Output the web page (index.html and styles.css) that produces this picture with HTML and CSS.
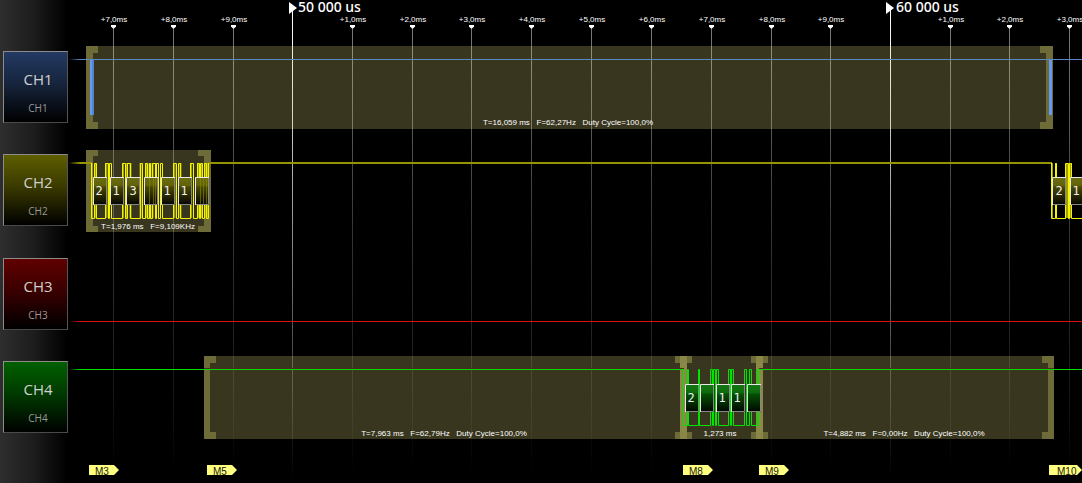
FILE: index.html
```html
<!DOCTYPE html>
<html lang="en">
<head>
<meta charset="utf-8">
<title>Logic analyzer</title>
<link rel="stylesheet" href="styles.css">
</head>
<body>
<div class="analyzer">
  <nav class="channels" aria-label="Channels">
    <button class="channel blue" type="button"><span class="name">CH1</span><span class="alias">CH1</span></button>
    <button class="channel yellow" type="button"><span class="name">CH2</span><span class="alias">CH2</span></button>
    <button class="channel red" type="button"><span class="name">CH3</span><span class="alias">CH3</span></button>
    <button class="channel green" type="button"><span class="name">CH4</span><span class="alias">CH4</span></button>
  </nav>
  <main class="plot">
    <svg class="canvas" viewBox="69 0 1013 483" preserveAspectRatio="xMinYMin slice" role="img" aria-label="Channel waveforms">
      <defs>
        <linearGradient id="minor" gradientUnits="userSpaceOnUse" x1="0" y1="28" x2="0" y2="475">
          <stop offset="0" stop-color="#787878"/><stop offset=".45" stop-color="#363636"/><stop offset=".8" stop-color="#181818"/><stop offset="1" stop-color="#000"/>
        </linearGradient>
        <linearGradient id="major" gradientUnits="userSpaceOnUse" x1="0" y1="12" x2="0" y2="480">
          <stop offset="0" stop-color="#fff"/><stop offset=".2" stop-color="#d4d4d4"/><stop offset=".7" stop-color="#505050"/><stop offset="1" stop-color="#000"/>
        </linearGradient>
        <linearGradient id="fade" gradientUnits="userSpaceOnUse" x1="69" y1="0" x2="80" y2="0">
          <stop offset="0" stop-color="#000"/><stop offset="1" stop-color="#000" stop-opacity="0"/>
        </linearGradient>
        <linearGradient id="olive" x1="0" y1="0" x2="0" y2="1">
          <stop offset="0" stop-color="#6c6c10"/><stop offset=".3" stop-color="#626208"/><stop offset=".36" stop-color="#484804"/><stop offset="1" stop-color="#050500"/>
        </linearGradient>
        <linearGradient id="leaf" x1="0" y1="0" x2="0" y2="1">
          <stop offset="0" stop-color="#147814"/><stop offset=".3" stop-color="#0c6c0c"/><stop offset=".36" stop-color="#055005"/><stop offset="1" stop-color="#000600"/>
        </linearGradient>
        <path id="tick" d="M-2 25h5v1.500l-2 2h-1l-2-2z"/>
        <path id="flag" d="M0 2l8 6-8 6z"/>
        <path id="tag" d="M0 465h25l5 5-5 5H0z"/>
        <g id="box"><rect width="14" height="28"/><path class="dim-edge" d="M0 27.500h13.500V0"/><path class="lit-edge" d="M.5 28V.5H14"/></g>
      </defs>

      <g class="grid-minor">
        <path d="M113 28h1v447h-1zM173 28h1v447h-1zM233 28h1v447h-1zM352 28h1v447h-1zM412 28h1v447h-1zM471 28h1v447h-1zM531 28h1v447h-1zM591 28h1v447h-1zM651 28h1v447h-1zM711 28h1v447h-1zM771 28h1v447h-1zM830 28h1v447h-1zM950 28h1v447h-1zM1009 28h1v447h-1zM1069 28h1v447h-1z"/>
      </g>
      <path class="grid-major" d="M292 10h1v470h-1zM890 10h1v470h-1z"/>

      <g class="marks">
        <use href="#flag" x="289"/><use href="#flag" x="886"/>
        <use href="#tick" x="113"/><use href="#tick" x="173"/><use href="#tick" x="233"/><use href="#tick" x="352"/><use href="#tick" x="412"/><use href="#tick" x="471"/><use href="#tick" x="531"/><use href="#tick" x="591"/><use href="#tick" x="651"/><use href="#tick" x="711"/><use href="#tick" x="771"/><use href="#tick" x="830"/><use href="#tick" x="950"/><use href="#tick" x="1009"/><use href="#tick" x="1069"/>
      </g>
      <g class="major-label"><text x="298" y="12">50 000 us</text><text x="896" y="12">60 000 us</text></g>
      <g class="small-label">
        <text x="114" y="22">+7,0ms</text><text x="174" y="22">+8,0ms</text><text x="234" y="22">+9,0ms</text>
        <text x="353" y="22">+1,0ms</text><text x="413" y="22">+2,0ms</text><text x="472" y="22">+3,0ms</text><text x="532" y="22">+4,0ms</text><text x="592" y="22">+5,0ms</text><text x="652" y="22">+6,0ms</text><text x="712" y="22">+7,0ms</text><text x="772" y="22">+8,0ms</text><text x="831" y="22">+9,0ms</text>
        <text x="951" y="22">+1,0ms</text><text x="1010" y="22">+2,0ms</text><text x="1070" y="22">+3,0ms</text>
      </g>

      <g class="region">
        <path d="M86 46h967v83H86zM86 150h125v82H86zM204 356h480v83H204zM684 356h76v83h-76zM760 356h294v83H760z"/>
      </g>
      <g class="bracket">
        <path d="M86 46h12v7h-5v69h5v7H86zM1053 46h-13v7h6v69h-6v7h13z"/>
        <path d="M86 150h12v6h-5v70h5v6H86zM211 150h-13v6h6v70h-6v6h13z"/>
        <path d="M204 356h12v7h-6v69h6v7h-12zM1054 356h-12v7h6v69h-6v7h12z"/>
        <path d="M675 356h17v7h-17zM675 432h17v7h-17zM751 356h17v7h-17zM751 432h17v7h-17z"/>
      </g>
      <path class="joint" d="M680 363h7v69h-7zM756 363h7v69h-7z"/>
      <path class="joint-end" d="M680 356h7v7h-7zM680 432h7v7h-7zM756 356h7v7h-7zM756 432h7v7h-7z"/>

      <path class="blue-line" d="M69 59.500H1082"/>
      <path class="blue-block" d="M90 60h2v55h-2zM1049 60h3v55h-3z"/>
      <path class="blue-soft" d="M92 60h2v55h-2z"/>

      <path class="yellow-line" d="M69 163H92M209 163H1052"/>
      <path class="yellow-soft" d="M92 163V218M96 163V218M106.500 163V218M123 163V218M127 163V218M130.500 163V218M140.500 163V218M146 163V218M149.500 163V218M152.500 163V218M156 163V218M174.500 163V218M180.500 163V218M191 163V218M198 163V218M202 163V218M205 163V218M208 163V218M1052 163V218M1056 163V218M1067 163V218M1071 163V218"/>
      <path class="yellow-wave" d="M91.500 163V218.500H94.500V163.500H96.500V218.500H105.500V163.500H108.500V218.500H109.500V163.500H111.500V218.500H122.500V163.500H125.500V218.500H127.500V163.500H130.500V218.500H140.500V163.500H142.500V218.500H145.500V163.500H147.500V218.500H149.500V163.500H150.500V218.500H152.500V163.500H155.500V218.500H156.500V163.500H158.500V218.500H160.500V163.500H162.500V218.500H173.500V163.500H176.500V218.500H178.500V163.500H180.500V218.500H190.500V163.500H193.500V218.500H197.500V163.500H199.500V218.500H200.500V163.500H202.500V218.500H204.500V163.500H206.500V218.500H208.500V163"/>
      <path class="yellow-wave" d="M1051.500 163V218.500H1055.500V163.500H1056.500V218.500H1065.500V163.500H1068.500V218.500H1069.500V163.500H1071.500V218.500H1082"/>
      <g class="olive-box">
        <use href="#box" x="93" y="177"/><use href="#box" x="110" y="177"/><use href="#box" x="126" y="177"/><use href="#box" x="144" y="177"/><use href="#box" x="161" y="177"/><use href="#box" x="178" y="177"/><use href="#box" x="195" y="177"/><use href="#box" x="1052" y="177"/><use href="#box" x="1070" y="177"/>
      </g>
      <path class="yellow-glint" d="M149.500 178V204M153.500 178V204M155.500 178V204M200.500 178V204M203.500 178V204M206.500 178V204"/>
      <g class="digit">
        <text x="99" y="195">2</text><text x="116" y="195">1</text><text x="133" y="195">3</text><text x="167" y="195">1</text><text x="184" y="195">1</text><text x="1059" y="195">2</text><text x="1076" y="195">1</text>
      </g>

      <path class="red-line" d="M69 321.500H1082"/>

      <path class="green-shade" d="M204 368.500H684M759 368.500H1054"/>
      <path class="green-line" d="M69 369.500H684M759 369.500H1082"/>
      <path class="green-wave" d="M683.500 369V425.500H687.500V369.500H688.500V425.500H698.500V369.500H699.500V425.500H710.500V369.500H712.500V425.500H713.500V369.500H715.500V425.500H716.500V369.500H718.500V425.500H728.500V369.500H730.500V425.500H731.500V369.500H733.500V425.500H744.500V369.500H746.500V425.500H749.500V369.500H751.500V425.500H757.500V369.500H759.500V425.500"/>
      <g class="leaf-box">
        <use href="#box" x="685" y="384"/><use href="#box" x="700" y="384"/><use href="#box" x="716" y="384"/><use href="#box" x="731" y="384"/><use href="#box" x="747" y="384"/>
      </g>
      <g class="digit"><text x="691" y="402">2</text><text x="722" y="402">1</text><text x="737" y="402">1</text></g>
      <path class="line-fade" d="M69 50h11v380H69z"/>

      <g class="small-label">
        <text x="568" y="125">T=16,059 ms&#160;&#160; F=62,27Hz&#160;&#160; Duty Cycle=100,0%</text>
        <text x="148" y="229">T=1,976 ms&#160;&#160; F=9,109KHz</text>
        <text x="444" y="436">T=7,963 ms&#160;&#160; F=62,79Hz&#160;&#160; Duty Cycle=100,0%</text>
        <text x="720" y="436">1,273 ms</text>
        <text x="904" y="436">T=4,882 ms&#160;&#160; F=0,00Hz&#160;&#160; Duty Cycle=100,0%</text>
      </g>

      <g class="tag">
        <use href="#tag" x="89"/><use href="#tag" x="207"/><use href="#tag" x="683"/><use href="#tag" x="759"/><path d="M1049 465h28l5 5-5 5h-28z"/>
      </g>
      <g class="tag-label">
        <text x="95" y="475">M3</text><text x="213" y="475">M5</text><text x="689" y="475">M8</text><text x="765" y="475">M9</text><text x="1057" y="475">M10</text>
      </g>
    </svg>
  </main>
</div>
</body>
</html>
```
FILE: styles.css
```css
body {
  margin: 0;
  background: #000;
  font-family: "Open Sans", "Liberation Sans", sans-serif;
}

.analyzer {
  display: flex;
  min-height: 100vh;
  overflow: hidden;
}

.channels {
  box-sizing: border-box;
  flex: none;
  width: 69px;
  padding: 51px 1px 50px 3px;
  display: flex;
  flex-direction: column;
  justify-content: space-between;
  background: linear-gradient(90deg, #2e2e2e, #1c1c1c 50%, #000 97%);
}

.channel {
  box-sizing: border-box;
  height: 72px;
  padding: 12px 0 0 5px;
  display: flex;
  flex-direction: column;
  align-items: center;
  gap: 8px;
  border: 1px solid;
  border-color: #8c8c8c #555 #4a4a4a #8c8c8c;
  font-family: inherit;
}

.blue { background: linear-gradient(#243a63, #16243c 45%, #000); }
.yellow { background: linear-gradient(#5e5e00, #3a3a00 45%, #000); }
.red { background: linear-gradient(#600000, #3a0000 45%, #000); }
.green { background: linear-gradient(#006000, #003a00 45%, #000); }

.name {
  font-size: 15px;
  font-weight: 500;
  line-height: 30px;
  color: #d0d0d0;
}

.alias {
  font-size: 10px;
  line-height: 12px;
  color: #999;
}

.plot {
  flex: 1;
  min-width: 0;
  display: flex;
}

.canvas {
  flex: 1;
  min-width: 0;
  display: block;
}

.grid-minor { fill: url(#minor); }
.grid-major { fill: url(#major); }
.marks { fill: #fff; }

.major-label {
  fill: #fff;
  font-family: "Noto Sans", sans-serif;
  font-size: 14px;
  font-weight: 500;
}

.small-label {
  fill: #fff;
  font-family: "Liberation Sans", sans-serif;
  font-size: 8px;
  text-anchor: middle;
}

.region { fill: rgba(255, 246, 137, 0.22); }
.bracket { fill: rgba(255, 250, 130, 0.27); }
.joint { fill: rgba(255, 250, 130, 0.42); }
.joint-end { fill: rgba(255, 250, 130, 0.2); }

.blue-line { stroke: #5b87c8; }
.blue-block { fill: #6699f0; }
.blue-soft { fill: #5582cc; }

.yellow-line { stroke: #969400; stroke-width: 2; }
.yellow-soft { stroke: #a0a000; fill: none; stroke-width: 2; }
.yellow-wave { stroke: #f4f400; fill: none; }
.yellow-glint { stroke: #8c8c00; opacity: 0.6; }

.red-line { stroke: #e01010; }
.green-shade { stroke: #4c2c1e; }
.green-line { stroke: #00dc00; }
.green-wave { stroke: #00e600; fill: none; }
.line-fade { fill: url(#fade); }

.olive-box { fill: url(#olive); }
.leaf-box { fill: url(#leaf); }
.lit-edge { fill: none; stroke: #e8e8e8; }
.dim-edge { fill: none; stroke: #888; }

.digit {
  fill: #f0f0f0;
  font-family: "DejaVu Sans Mono", monospace;
  font-size: 12px;
  text-anchor: middle;
}

.tag { fill: #ffff80; }

.tag-label {
  fill: #202010;
  font-family: "Liberation Sans", sans-serif;
  font-size: 10px;
}
```
